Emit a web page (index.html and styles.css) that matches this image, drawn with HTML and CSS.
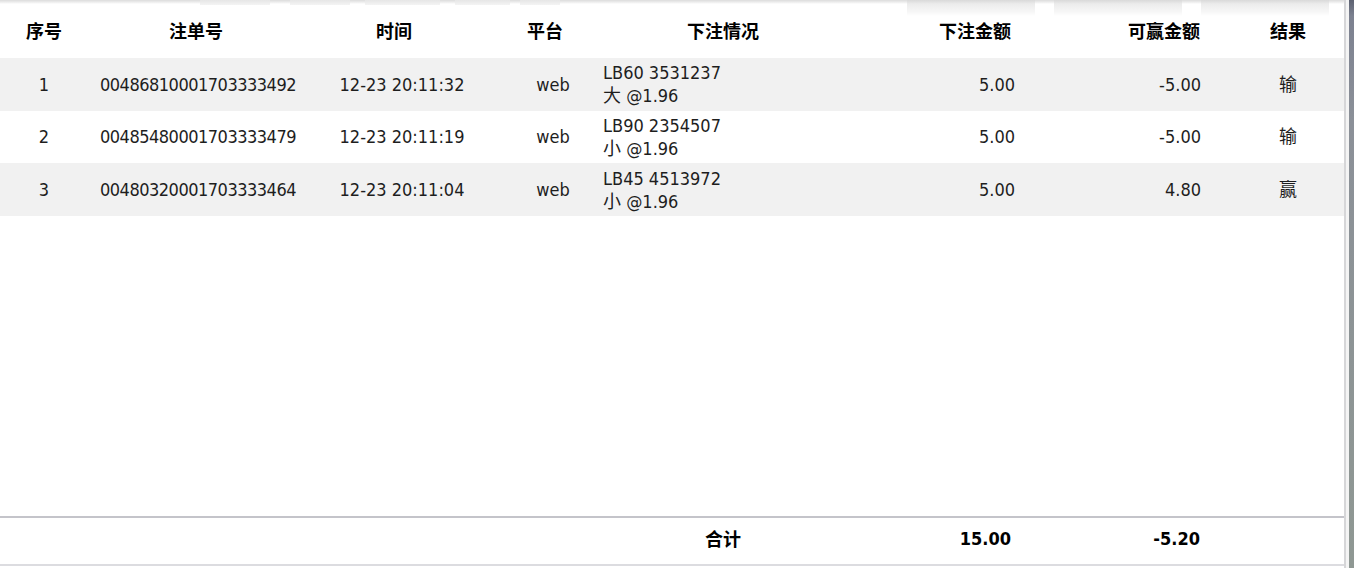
FILE: index.html
```html
<!DOCTYPE html>
<html lang="zh-CN">
<head>
<meta charset="utf-8">
<title>注单明细</title>
<link rel="stylesheet" href="styles.css">
</head>
<body>
<div class="page">
  <div class="panel">
    <div class="ghost">
      <span class="ghost-text g1"></span>
      <span class="ghost-text g2"></span>
      <span class="ghost-text g3"></span>
      <span class="ghost-text g4"></span>
      <span class="ghost-text g5"></span>
      <span class="ghost-btn b1"></span>
      <span class="ghost-btn b2"></span>
      <span class="ghost-btn b3"></span>
    </div>
    <table class="grid">
      <colgroup>
        <col class="w1"><col class="w2"><col class="w3"><col class="w4"><col class="w5"><col class="w6"><col class="w7"><col class="w8">
      </colgroup>
      <thead>
        <tr>
          <th class="c1">序号</th>
          <th class="c2">注单号</th>
          <th class="c3">时间</th>
          <th class="c4">平台</th>
          <th class="c5">下注情况</th>
          <th class="c6">下注金额</th>
          <th class="c7">可赢金额</th>
          <th class="c8">结果</th>
        </tr>
      </thead>
      <tbody>
        <tr class="odd">
          <td class="c1">1</td>
          <td class="c2">00486810001703333492</td>
          <td class="c3">12-23 20:11:32</td>
          <td class="c4">web</td>
          <td class="c5">LB60 3531237<br>大 @1.96</td>
          <td class="c6">5.00</td>
          <td class="c7">-5.00</td>
          <td class="c8">输</td>
        </tr>
        <tr>
          <td class="c1">2</td>
          <td class="c2">00485480001703333479</td>
          <td class="c3">12-23 20:11:19</td>
          <td class="c4">web</td>
          <td class="c5">LB90 2354507<br>小 @1.96</td>
          <td class="c6">5.00</td>
          <td class="c7">-5.00</td>
          <td class="c8">输</td>
        </tr>
        <tr class="odd">
          <td class="c1">3</td>
          <td class="c2">00480320001703333464</td>
          <td class="c3">12-23 20:11:04</td>
          <td class="c4">web</td>
          <td class="c5">LB45 4513972<br>小 @1.96</td>
          <td class="c6">5.00</td>
          <td class="c7">4.80</td>
          <td class="c8">赢</td>
        </tr>
      </tbody>
    </table>
    <div class="spacer"></div>
    <table class="grid total">
      <colgroup>
        <col class="w1"><col class="w2"><col class="w3"><col class="w4"><col class="w5"><col class="w6"><col class="w7"><col class="w8">
      </colgroup>
      <tbody>
        <tr>
          <td></td><td></td><td></td><td></td>
          <td class="c5 sum-label">合计</td>
          <td class="c6 sum">15.00</td>
          <td class="c7 sum">-5.20</td>
          <td></td>
        </tr>
      </tbody>
    </table>
  </div>
  <div class="edge-line"></div>
  <div class="edge-gap"></div>
  <div class="edge-strip"></div>
</div>
</body>
</html>
```
FILE: styles.css
```css
* { box-sizing: border-box; }

html, body {
  margin: 0;
  padding: 0;
  background: #ffffff;
}

body {
  font-family: "DejaVu Sans Condensed", "DejaVu Sans", "Noto Sans CJK SC", sans-serif;
  font-stretch: condensed;
  font-size: 18px;
  color: #1e1e1e;
}

.page {
  display: flex;
  width: 1354px;
  height: 568px;
  overflow: hidden;
}

.panel {
  position: relative;
  width: 1344px;
  flex: none;
  display: flex;
  flex-direction: column;
  padding-top: 6px;
  padding-bottom: 2px;
  background: #ffffff;
}

/* faint controls behind the dialog, bleeding through at the top */
.ghost {
  position: absolute;
  left: 0;
  top: 0;
  width: 1344px;
  height: 20px;
  background: linear-gradient(#dcdcdc 0, #ececec 2px, #ffffff 4px);
  pointer-events: none;
}

.ghost-text {
  position: absolute;
  top: 0;
  height: 5px;
  background: linear-gradient(#e6e6e6, #f4f4f4);
}
.g1 { left: 200px; width: 70px; }
.g2 { left: 290px; width: 60px; }
.g3 { left: 365px; width: 75px; }
.g4 { left: 455px; width: 55px; }
.g5 { left: 520px; width: 40px; }

.ghost-btn {
  position: absolute;
  top: 0;
  width: 128px;
  height: 16px;
  background: linear-gradient(#d9d9d9 0, #ececec 4px, #f7f7f7 12px, #ffffff 16px);
}
.b1 { left: 907px; }
.b2 { left: 1054px; }
.b3 { left: 1201px; }

.grid {
  position: relative;
  width: 1344px;
  border-collapse: collapse;
  table-layout: fixed;
}

.w1 { width: 88px; }
.w2 { width: 216px; }
.w3 { width: 186px; }
.w4 { width: 105px; }
.w5 { width: 256px; }
.w6 { width: 172px; }
.w7 { width: 209px; }
.w8 { width: 112px; }

.grid th,
.grid td {
  padding: 0;
  vertical-align: middle;
  white-space: nowrap;
}

.grid th {
  height: 52px;
  padding-bottom: 4px;
  font-family: "Noto Sans CJK SC", sans-serif;
  font-weight: bold;
  font-size: 18px;
  color: #000000;
}

.grid tbody td {
  height: 52.67px;
  line-height: 23px;
}

.grid tbody tr.odd td { background: #f1f1f1; }

.c1 { text-align: center; }
.c2 { text-align: center; }
td.c2 { padding-left: 4px; letter-spacing: -0.5px; }
.c3 { text-align: center; }
th.c3 { padding-right: 6px; }
td.c3 { padding-left: 10px; }
.c4 { text-align: center; }
th.c4 { padding-left: 5px; }
td.c4 { padding-left: 21px; }
th.c5 { text-align: center; }
td.c5 { text-align: left; padding-left: 8px; }
.c6 { text-align: right; }
th.c6 { padding-right: 12px; }
td.c6 { padding-right: 8px; }
.c7 { text-align: right; }
th.c7 { padding-right: 32px; }
td.c7 { padding-right: 31px; }
.c8 { text-align: center; }

.spacer { flex: 1; }

.total {
  border-top: 2px solid #c4c4ca;
  border-bottom: 2px solid #dcdce0;
}

.grid.total td {
  height: 48px;
  padding-bottom: 6px;
  font-weight: bold;
  color: #000000;
}

.grid.total td.sum-label {
  text-align: center;
  padding-left: 0;
  font-family: "Noto Sans CJK SC", sans-serif;
  font-size: 18px;
}

.grid.total td.c6 { padding-right: 12px; }
.grid.total td.c7 { padding-right: 32px; }

.edge-line {
  width: 2px;
  flex: none;
  background: #d6d6d8;
}

.edge-gap {
  width: 3px;
  flex: none;
  background: #f4f4f4;
}

.edge-strip {
  width: 5px;
  flex: none;
  background: linear-gradient(#5d6272 0, #7c8190 16px, #8b9098 120px, #8f9893 568px);
}
```
